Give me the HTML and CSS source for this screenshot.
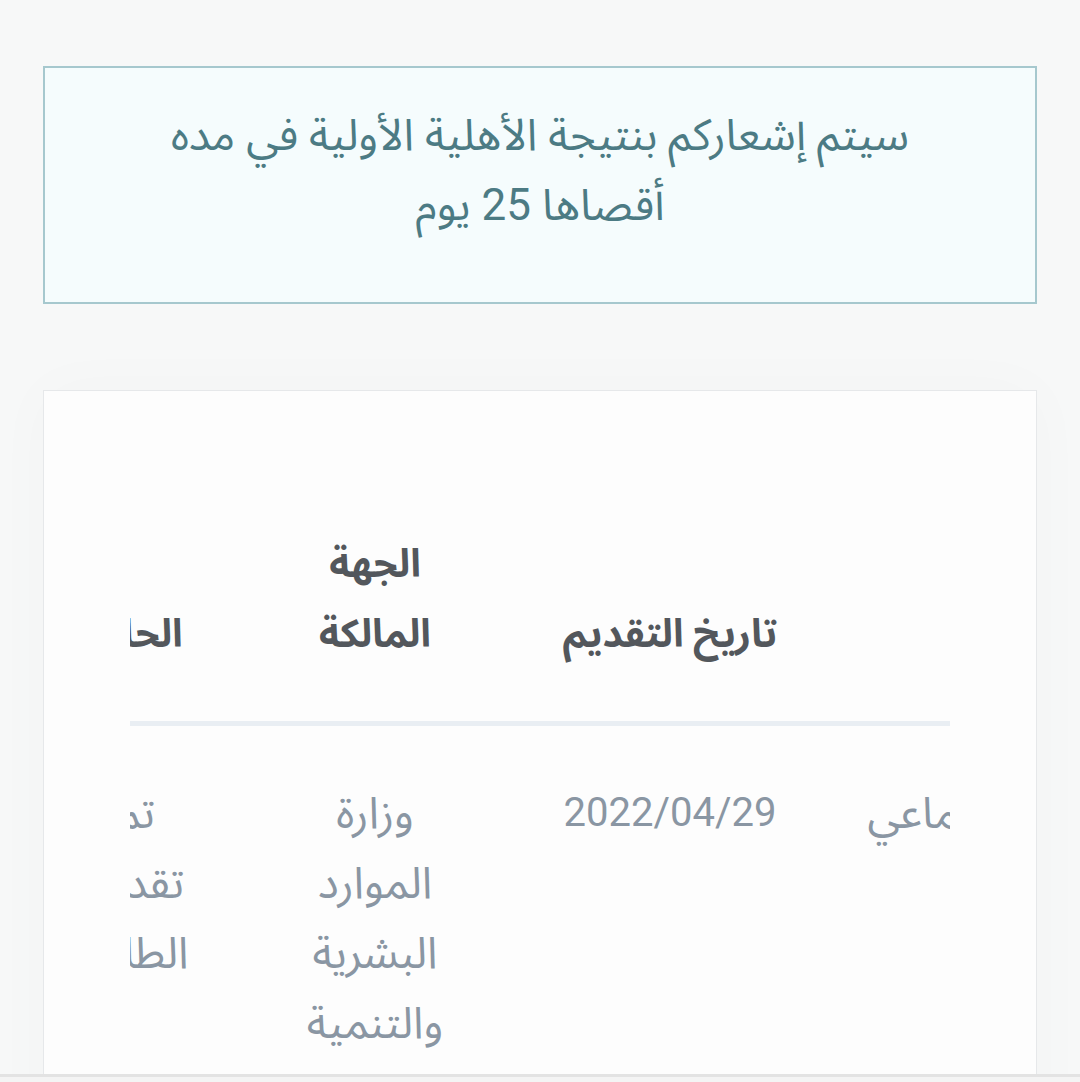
FILE: index.html
```html
<!DOCTYPE html>
<html lang="ar" dir="rtl">
<head>
<meta charset="utf-8">
<title>الطلبات</title>
<link rel="stylesheet" href="styles.css">
</head>
<body>
<main class="page">
  <div class="alert">
    <p>سيتم إشعاركم بنتيجة الأهلية الأولية في مده أقصاها 25 يوم</p>
  </div>
  <section class="card">
    <div class="table-wrap">
      <table class="apps">
        <colgroup>
          <col class="c-service">
          <col class="c-date">
          <col class="c-owner">
          <col class="c-status">
          <col class="c-action">
        </colgroup>
        <thead>
          <tr>
            <th>الخدمة</th>
            <th>تاريخ التقديم</th>
            <th>الجهة المالكة</th>
            <th>الحالة</th>
            <th>الإجراءات</th>
          </tr>
        </thead>
        <tbody>
          <tr>
            <td class="one-line">الضمان الاجتماعي</td>
            <td class="one-line date">2022/04/29</td>
            <td>وزارة الموارد البشرية والتنمية</td>
            <td>تم تقديم الطلب</td>
            <td>عرض التفاصيل</td>
          </tr>
        </tbody>
      </table>
    </div>
  </section>
</main>
<div class="bottom-bar"></div>
</body>
</html>
```

FILE: styles.css
```css
html, body {
  margin: 0;
  padding: 0;
}
body {
  background: #f7f8f8;
  font-family: Roboto, "Noto Sans Arabic", "Noto Naskh Arabic", "DejaVu Sans", sans-serif;
  color: #555a60;
}
.page {
  padding: 66px 43px 0;
}
.alert {
  background: #f5fcfd;
  border: 2px solid #a6c8ce;
  padding: 32px 95px;
  text-align: center;
  color: #4c7b84;
  font-size: 44px;
  line-height: 70px;
}
.alert p {
  margin: 0 0 30px;
}
.card {
  margin-top: 86px;
  background: #fdfdfd;
  border: 1px solid #e6e8ea;
  box-shadow: 0 0 60px rgba(0, 0, 0, 0.025);
  padding: 86px 86px 200px;
}
.table-wrap {
  overflow: hidden;
}
.apps {
  table-layout: fixed;
  border-collapse: collapse;
  width: 1512px;
  margin-right: -288.5px;
  font-size: 44px;
  line-height: 70px;
}
.c-service { width: 403px; }
.c-date { width: 331px; }
.c-owner { width: 259px; }
.c-status { width: 219px; }
.c-action { width: 300px; }
.apps th,
.apps td {
  padding: 52px 57px;
  text-align: center;
}
.apps th {
  vertical-align: bottom;
  font-weight: 700;
  color: #53575c;
  font-size: 39px;
  border-bottom: 5px solid #e9eef3;
}
.apps td {
  vertical-align: top;
  color: #8a96a3;
}
.apps td.date {
  font-size: 40px;
}
.one-line {
  white-space: nowrap;
}
.bottom-bar {
  position: fixed;
  left: 0;
  right: 0;
  bottom: 0;
  height: 5px;
  background: #f4f4f4;
  border-top: 3px solid #e3e3e3;
}
```
